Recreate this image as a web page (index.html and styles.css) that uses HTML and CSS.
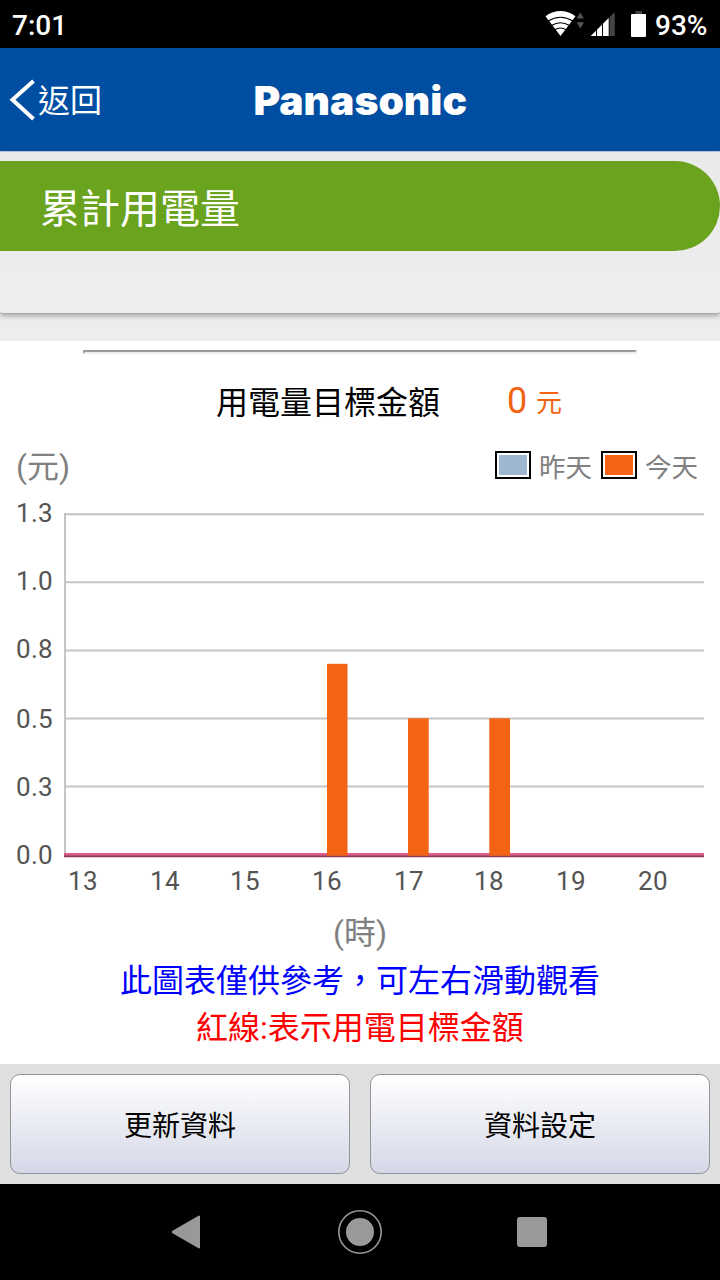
FILE: index.html
```html
<!DOCTYPE html>
<html lang="zh-Hant">
<head>
<meta charset="utf-8">
<title>累計用電量</title>
<link rel="stylesheet" href="styles.css">
</head>
<body>
<div class="status">
  <span class="clock">7:01</span>
  <svg class="signals" width="130" height="48" viewBox="0 0 130 48">
    <path d="M5.500 16.200Q20.500 6 35.500 16.200L20.500 36Z" fill="#fff"/>
    <path d="M8 21Q20.500 13.500 33 21M11.500 25.500Q20.500 20 29.500 25.500M14.500 30Q20.500 26 26.500 30" fill="none" stroke="#000" stroke-width="1.200"/>
    <path d="M36.700 18.500L40.300 12.500L43.900 18.500ZM36.700 22.200L40.300 28.500L43.900 22.200Z" fill="#555"/>
    <path d="M50.700 36L68.700 18V36Z" fill="#fff"/>
    <path d="M69.500 17.200L74.800 12V36H69.500Z" fill="#444"/>
    <path d="M56.500 24V36M62.500 20V36" stroke="#000" stroke-width="1"/>
    <path d="M95.500 11H102V14H95.500Z" fill="#444"/>
    <rect x="91" y="14" width="15" height="23" rx="1" fill="#fff"/>
  </svg>
  <span class="percent">93%</span>
</div>
<header class="header">
  <div class="back">
    <svg width="28" height="44" viewBox="0 0 28 44"><path d="M25.500 3L4.500 21.800L25.500 41" fill="none" stroke="#fff" stroke-width="4"/></svg>
    <span>返回</span>
  </div>
  <svg class="logo" width="220" height="66" viewBox="0 0 220 66"><text x="1.500" y="47.800" textLength="213.500" lengthAdjust="spacingAndGlyphs">Panasonic</text></svg>
</header>
<section class="summary">
  <div class="summary-card"><h1 class="title">累計用電量</h1></div>
</section>
<main class="main">
  <hr class="rule">
  <div class="target">
    <span class="target-label">用電量目標金額</span>
    <span class="target-value">0</span>
    <span class="target-unit">元</span>
  </div>
  <div class="legend">
    <span class="axis-unit">(元)</span>
    <span class="swatch yesterday"></span><span class="legend-text">昨天</span>
    <span class="swatch today"></span><span class="legend-text">今天</span>
  </div>
  <svg class="chart" width="720" height="412" viewBox="0 494 720 412">
    <g stroke="#c4c4c4" stroke-width="2">
      <path d="M64 514.300H704M64 582.300H704M64 650.400H704M64 718.400H704M64 786.400H704"/>
      <path d="M65 513V857"/>
    </g>
    <path d="M64 854.300H704" stroke="#e8588a" stroke-width="2.600"/>
    <path d="M64 856.300H704" stroke="#90385c" stroke-width="2"/>
    <g fill="#f26313">
      <rect x="327" y="663.800" width="20.500" height="191.900"/>
      <rect x="408" y="718.300" width="20.700" height="137.400"/>
      <rect x="489.300" y="718.300" width="20.700" height="137.400"/>
    </g>
    <g class="ticks" text-anchor="end">
      <text x="53" y="522">1.3</text><text x="53" y="590">1.0</text><text x="53" y="658">0.8</text><text x="53" y="728">0.5</text><text x="53" y="796">0.3</text><text x="53" y="864">0.0</text>
    </g>
    <g class="ticks" text-anchor="middle">
      <text x="83" y="890">13</text><text x="165" y="890">14</text><text x="245" y="890">15</text><text x="327" y="890">16</text><text x="409" y="890">17</text><text x="489" y="890">18</text><text x="571" y="890">19</text><text x="653" y="890">20</text>
    </g>
  </svg>
  <div class="hour">(時)</div>
  <p class="note blue">此圖表僅供參考，可左右滑動觀看</p>
  <p class="note red">紅線:表示用電目標金額</p>
</main>
<div class="actions">
  <button class="action">更新資料</button>
  <button class="action">資料設定</button>
</div>
<nav class="nav">
  <svg width="720" height="96" viewBox="0 0 720 96" fill="#999">
    <path d="M173 47.500L199 32.500V63.500L173 48.500Z" stroke="#999" stroke-width="2" stroke-linejoin="round"/>
    <circle cx="360" cy="48" r="21.200" fill="none" stroke="#999" stroke-width="1.600"/>
    <circle cx="360" cy="48" r="14"/>
    <rect x="517" y="33" width="30" height="30" rx="3"/>
  </svg>
</nav>
</body>
</html>
```
FILE: styles.css
```css
* { box-sizing: border-box; }
body {
  margin: 0;
  width: 720px;
  height: 1280px;
  overflow: hidden;
  background: #fff;
  font-family: Roboto, "Noto Sans CJK TC", sans-serif;
}
.status {
  display: flex;
  height: 48px;
  background: #000;
  color: #fff;
  font-size: 28px;
  font-weight: 500;
  line-height: 52px;
}
.clock { width: 540px; padding-left: 12px; }
.signals { flex: none; }
.signals + .percent { margin-left: -15px; }
.header {
  display: grid;
  grid-template-columns: 252px 220px 1fr;
  align-items: center;
  height: 103px;
  background: #004ea2;
  color: #fff;
}
.back {
  display: flex;
  align-items: center;
  padding-left: 8px;
  font-size: 32px;
  line-height: 44px;
}
.back span { margin-left: 2px; padding-top: 3px; }
.logo text {
  font-family: Inter, sans-serif;
  font-weight: 900;
  font-size: 39.500px;
  fill: #fff;
}
.summary {
  height: 190px;
  border-top: 1px solid #b9cbe0;
  background: #ededed;
}
.summary-card {
  height: 162px;
  padding-top: 9.300px;
  border-bottom: 1px solid #aaa;
  background: linear-gradient(#eaeaea, #eee);
  border-radius: 0 0 3px 3px;
  box-shadow: 0 2px 5px rgba(0, 0, 0, .3);
}
.title {
  height: 90px;
  margin: 0;
  padding-left: 40px;
  border-radius: 0 45px 45px 0;
  background: #6aa31d;
  color: #fff;
  font-size: 40px;
  font-weight: 400;
  line-height: 97px;
}
.main { height: 723px; padding-top: 9px; }
.rule {
  width: 554px;
  height: 4px;
  margin: 0 83px;
  border: 2px solid;
  border-color: #9a9a9a #eee #eee #9a9a9a;
}
.target {
  display: flex;
  height: 92px;
  padding-left: 216px;
  font-size: 32px;
  line-height: 98px;
}
.target-label { width: 291px; }
.target-value { width: 29px; color: #f26313; font-size: 36px; line-height: 94px; }
.target-unit { color: #f26313; font-size: 26px; line-height: 98px; }
.legend {
  display: flex;
  align-items: center;
  height: 38px;
  margin-bottom: 10px;
  padding-left: 16px;
  color: #808080;
  font-size: 26.500px;
  white-space: nowrap;
}
.axis-unit { flex: none; width: 479px; margin-top: -3px; font-size: 32px; }
.swatch {
  flex: none;
  width: 36px;
  height: 28px;
  border: 2px solid #000;
  box-shadow: inset 0 0 0 2px #fff;
}
.yesterday { background: #9eb6cf; }
.today { background: #f26313; }
.legend-text { flex: none; width: 53px; margin: 1px 8px 0; }
.yesterday + .legend-text { margin-right: 9px; }
.chart { display: block; }
.ticks { font-family: Roboto, sans-serif; font-size: 26px; fill: #545454; letter-spacing: .3px; }
.hour { height: 50px; color: #808080; font-size: 32px; line-height: 55px; text-align: center; }
.note { margin: 0; height: 48px; font-size: 32px; line-height: 50px; text-align: center; }
.blue { color: #00f; }
.red { color: #f00; line-height: 49px; }
.actions {
  display: flex;
  gap: 20px;
  height: 120px;
  padding: 10px;
  background: #e0e0e0;
}
.action {
  flex: 1;
  height: 100px;
  border: 1.500px solid #909498;
  border-radius: 10px;
  background: linear-gradient(#fff, #d4d8e7);
  color: #000;
  font-family: Roboto, "Noto Sans CJK TC", sans-serif;
  font-size: 28px;
}
.nav { height: 96px; background: #000; }
```
